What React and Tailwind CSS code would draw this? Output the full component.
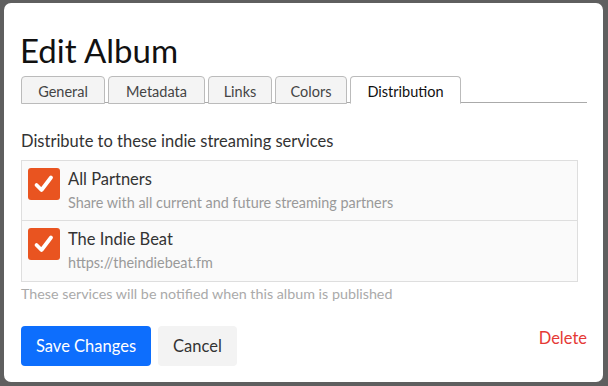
import React from "react";

function Check() {
  return (
    <div className="w-8 h-8 rounded-[3px] bg-[#e95420] flex items-center justify-center shrink-0">
      <svg width="24" height="24" viewBox="0 0 24 24" fill="none" stroke="white" strokeWidth="3.8" strokeLinecap="round" strokeLinejoin="round">
        <path d="M4.5 13l5 5L19 5.5" />
      </svg>
    </div>
  );
}

function Row({ title, sub, last }) {
  return (
    <div className={"flex gap-2 px-[6px] pt-[7px] h-[60px] " + (last ? "" : "border-b border-[#dedede]")}>
      <Check />
      <div className="flex flex-col">
        <div className="text-[16.5px] leading-[24px] text-[#333] mt-[-1px]">{title}</div>
        <div className="text-[14.4px] leading-[20px] text-[#999] mt-[2px]">{sub}</div>
      </div>
    </div>
  );
}

export default function App() {
  const tabs = ["General", "Metadata", "Links", "Colors", "Distribution"];
  const widths = ["w-[84px]", "w-[97px]", "w-[64px]", "w-[72px]", "w-[111px]"];
  return (
    <div className="w-[608px] h-[386px] bg-[#5f5f5f] p-[4px] pt-[3px] pr-[5px] pb-[4px]" style={{ fontFamily: "Lato, 'Noto Sans', sans-serif" }}>
      <div className="w-full h-full bg-white rounded-[7px] px-[17px] pt-[29px]">
        <h1 className="text-[33px] leading-[36px] text-[#111] ml-[-1px]">Edit Album</h1>
        <div className="mt-[8px] flex gap-[3px] border-b border-[#aaa] w-[566px] h-[27px]">
          {tabs.map((t, i) => (
            <div
              key={t}
              className={
                widths[i] +
                " h-[28px] flex items-center justify-center pt-[3px] text-[14.5px] rounded-t-[4px] border border-[#bbb] " +
                (i === 4 ? "bg-white text-[#111] border-b-white" : "bg-[#f4f4f4] text-[#444]")
              }
            >
              {t}
            </div>
          ))}
        </div>
        <div className="mt-[26px] text-[16.5px] leading-[24px] text-[#333]">Distribute to these indie streaming services</div>
        <div className="mt-[7px] w-[557px] border border-[#dedede] bg-[#fafafa]">
          <Row title="All Partners" sub="Share with all current and future streaming partners" />
          <Row title="The Indie Beat" sub="https://theindiebeat.fm" last />
        </div>
        <div className="mt-[3px] text-[14.3px] leading-[18px] text-[#aaa]">These services will be notified when this album is published</div>
        <div className="mt-[23px] flex items-start w-[566px]">
          <button className="h-[40px] px-[15px] bg-[#0d6efd] text-white text-[16.5px] rounded-[4px]">Save Changes</button>
          <button className="ml-[7px] h-[40px] px-[15px] bg-[#f3f3f3] text-[#333] text-[16.5px] rounded-[4px]">Cancel</button>
          <div className="ml-auto text-[16.5px] leading-[24px] text-[#e53935] mt-0">Delete</div>
        </div>
      </div>
    </div>
  );
}
